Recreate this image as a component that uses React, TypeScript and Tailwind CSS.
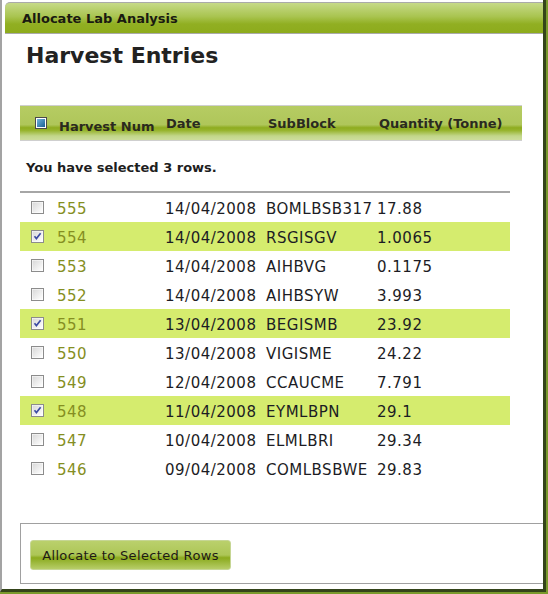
import React from "react";

type Row = { num: string; date: string; sub: string; qty: string; sel: boolean };

const rows: Row[] = [
  { num: "555", date: "14/04/2008", sub: "BOMLBSB317", qty: "17.88", sel: false },
  { num: "554", date: "14/04/2008", sub: "RSGISGV", qty: "1.0065", sel: true },
  { num: "553", date: "14/04/2008", sub: "AIHBVG", qty: "0.1175", sel: false },
  { num: "552", date: "14/04/2008", sub: "AIHBSYW", qty: "3.993", sel: false },
  { num: "551", date: "13/04/2008", sub: "BEGISMB", qty: "23.92", sel: true },
  { num: "550", date: "13/04/2008", sub: "VIGISME", qty: "24.22", sel: false },
  { num: "549", date: "12/04/2008", sub: "CCAUCME", qty: "7.791", sel: false },
  { num: "548", date: "11/04/2008", sub: "EYMLBPN", qty: "29.1", sel: true },
  { num: "547", date: "10/04/2008", sub: "ELMLBRI", qty: "29.34", sel: false },
  { num: "546", date: "09/04/2008", sub: "COMLBSBWE", qty: "29.83", sel: false },
];

function Check({ checked }: { checked: boolean }) {
  return (
    <svg width="13" height="13" viewBox="0 0 13 13" className="block">
      <defs>
        <linearGradient id="cbg" x1="0" y1="0" x2="1" y2="1">
          <stop offset="0" stopColor="#d8d8d8" />
          <stop offset="1" stopColor="#ffffff" />
        </linearGradient>
      </defs>
      <rect x="0.5" y="0.5" width="12" height="12" fill="#ffffff" stroke="#8c8c8c" />
      <rect x="1.5" y="1.5" width="10" height="10" fill="url(#cbg)" />
      {checked && (
        <path d="M3.5 6.2 L5.4 8.6 L9.6 3.2" fill="none" stroke="#3b4aa3" strokeWidth="1.6" />
      )}
    </svg>
  );
}

function HeaderCheck() {
  return (
    <svg width="12" height="12" viewBox="0 0 12 12" className="block">
      <defs>
        <linearGradient id="hcb" x1="0" y1="0" x2="1" y2="1">
          <stop offset="0" stopColor="#6fb3dc" />
          <stop offset="1" stopColor="#1a5f94" />
        </linearGradient>
      </defs>
      <rect x="0.5" y="0.5" width="11" height="11" fill="#ffffff" stroke="#4a4a4a" />
      <rect x="2" y="2" width="8" height="8" fill="url(#hcb)" />
    </svg>
  );
}

export default function App() {
  return (
    <div className="w-[548px] h-[594px] bg-[#7a9a2c] font-['DejaVu_Sans',sans-serif] overflow-hidden">
      <div className="w-[546px] h-[592px] bg-white border-l-2 border-l-[#a3a3a3] border-r-[3px] border-r-[#34441a] border-b-[3px] border-b-[#34441a] flex flex-col">
        {/* title bar */}
        <div className="ml-[3px] mt-[2px] h-[32px] rounded-tl-[5px] border-t border-b border-[#aaaaaa] bg-[linear-gradient(to_bottom,#c6da88_0%,#a9c450_45%,#91af22_70%,#8dab1c_100%)] flex items-center pl-[17px]">
          <span className="text-[13px] font-bold text-[#1a1a10] leading-none">Allocate Lab Analysis</span>
        </div>

        {/* heading */}
        <h1 className="mt-[9px] ml-[24px] text-[22px] leading-[26px] font-bold text-[#222222]">Harvest Entries</h1>

        {/* table header */}
        <div className="mt-[36px] ml-[18px] w-[502px] h-[36px] border-t border-b border-[#cfcfcf] bg-[linear-gradient(to_bottom,#b6cc63_0%,#afc65a_55%,#8eac1f_64%,#97b42e_72%,#c2d68a_88%,#cddd9c_100%)] grid grid-cols-[39px_107px_102px_111px_1fr] text-[13px] font-bold text-[#2a2a1e] leading-[16px]">
          <div className="pl-[15px] pt-[11px]">
            <HeaderCheck />
          </div>
          <div className="pt-[13px]">Harvest Num</div>
          <div className="pt-[10px]">Date</div>
          <div className="pt-[10px]">SubBlock</div>
          <div className="pt-[10px]">Quantity (Tonne)</div>
        </div>

        {/* selected text */}
        <div className="mt-[19px] ml-[24px] text-[13px] leading-[16px] font-bold text-[#1e1e1e]">
          You have selected 3 rows.
        </div>

        <div className="mt-[15px] ml-[18px] w-[490px] h-[2px] bg-[#a6a6a6]" />

        {/* rows */}
        <div className="ml-[18px] w-[490px] flex flex-col">
          {rows.map((r) => (
            <div
              key={r.num}
              className={`h-[29px] grid grid-cols-[37px_108px_101px_111px_1fr] items-center text-[15px] leading-[18px] tracking-[0.5px] ${r.sel ? "bg-[#d5ec6e]" : ""}`}
            >
              <div className="pl-[11px]">
                <Check checked={r.sel} />
              </div>
              <div className="pt-[2px] text-[#858e22]">{r.num}</div>
              <div className="pt-[2px] text-[#1c1c24]">{r.date}</div>
              <div className="pt-[2px] text-[#1c1c24]">{r.sub}</div>
              <div className="pt-[2px] text-[#1c1c24]">{r.qty}</div>
            </div>
          ))}
        </div>

        {/* bottom panel */}
        <div className="mt-[40px] ml-[18px] h-[61px] border-l border-t border-b border-[#a0a0a0] pl-[9px] pt-[16px]">
          <button className="w-[201px] h-[30px] rounded-[3px] border border-[#c6d694] bg-[linear-gradient(to_bottom,#bad06c_0%,#adc657_50%,#8cab1e_60%,#97b433_72%,#b7cd68_100%)] text-[13px] tracking-[0.35px] text-[#1e1a14] leading-none">
            Allocate to Selected Rows
          </button>
        </div>
      </div>
    </div>
  );
}
